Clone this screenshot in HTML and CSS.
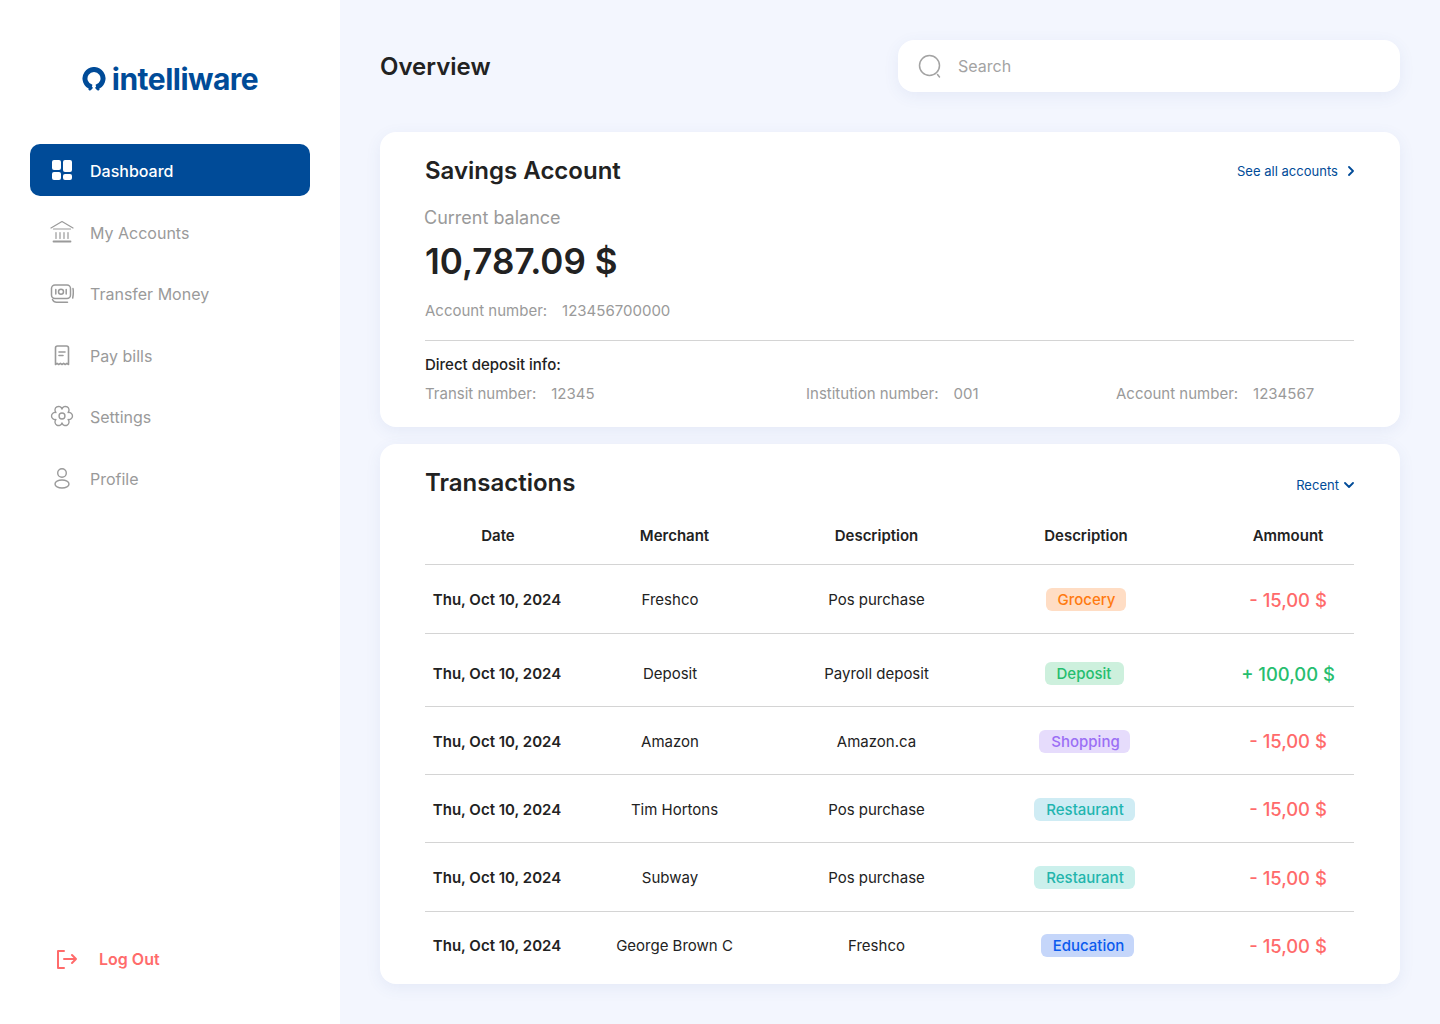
FILE: index.html
```html
<!DOCTYPE html>
<html lang="en">
<head>
  <meta charset="UTF-8">
  <meta name="viewport" content="width=device-width, initial-scale=1.0">
  <title>Intelliware - Overview</title>
  <link rel="stylesheet" href="styles.css">
</head>
<body>
  <aside class="sidebar">
    <div class="logo">
      <svg class="logo_mark" width="24" height="24" viewBox="0 0 24 24" fill="none" stroke="#004b98">
        <path stroke-width="5" d="M9.800 20.200A9 9 0 1 1 14.200 20.200"/>
        <path stroke-width="2.600" stroke-linecap="round" d="M7.800 22.200l1.600-1.400M16.200 22.200l-1.600-1.400"/>
      </svg>
      <span class="logo_text">intelliware</span>
    </div>
    <nav class="nav_list">
      <a class="nav_item active">
        <svg width="24" height="24" viewBox="0 0 24 24" fill="#fff">
          <rect x="2" y="2" width="9" height="10" rx="2"/>
          <rect x="13" y="2" width="9" height="12" rx="2"/>
          <rect x="2" y="14" width="9" height="8" rx="2"/>
          <rect x="13" y="16" width="9" height="6" rx="2"/>
        </svg>
        <span>Dashboard</span>
      </a>
      <a class="nav_item">
        <svg width="24" height="24" viewBox="0 0 24 24" fill="none" stroke="#9a9a9a" stroke-width="1.200" stroke-linecap="round" stroke-linejoin="round">
          <path d="M1 8 12 1.500 23 8"/>
          <path d="M3.500 9h17"/>
          <path d="M6 12.500v6M10 12.500v6M14 12.500v6M18 12.500v6"/>
          <path d="M3.500 21.500h17" stroke-width="1.800"/>
        </svg>
        <span>My Accounts</span>
      </a>
      <a class="nav_item">
        <svg width="24" height="24" viewBox="0 0 24 24" fill="none" stroke="#9a9a9a" stroke-width="1.500" stroke-linecap="round" stroke-linejoin="round">
          <rect x="1.500" y="4" width="19" height="13.500" rx="3.500"/>
          <circle cx="11" cy="10.700" r="2.500"/>
          <path d="M5.800 8.500v4.500M16.200 8.500v4.500"/>
          <path d="M2.500 18.500c.8 1.700 2 2.800 4 2.800h11"/>
          <path d="M23 7.500c.5 3 .4 6-.3 9.500"/>
        </svg>
        <span>Transfer Money</span>
      </a>
      <a class="nav_item">
        <svg width="24" height="24" viewBox="0 0 24 24" fill="none" stroke="#9a9a9a" stroke-width="1.600" stroke-linecap="round" stroke-linejoin="round">
          <path d="M5.500 21.500V5a2 2 0 0 1 2-2h9a2 2 0 0 1 2 2v16.500l-1.600-1.100-1.700 1.100-1.600-1.100-1.600 1.100-1.600-1.100-1.700 1.100-1.600-1.100z"/>
          <path d="M9 9h6M9 12.500h4"/>
        </svg>
        <span>Pay bills</span>
      </a>
      <a class="nav_item">
        <svg width="24" height="24" viewBox="-1 -1 26 26" fill="none" stroke="#9a9a9a" stroke-width="1.500" stroke-linecap="round" stroke-linejoin="round">
          <path d="M12 4.400A3.900 3.900 0 1 1 18.600 8.200 3.900 3.900 0 1 1 18.600 15.800 3.900 3.900 0 1 1 12 19.600 3.900 3.900 0 1 1 5.400 15.800 3.900 3.900 0 1 1 5.400 8.200 3.900 3.900 0 1 1 12 4.400z"/>
          <circle cx="12" cy="12" r="3.200"/>
        </svg>
        <span>Settings</span>
      </a>
      <a class="nav_item">
        <svg width="24" height="24" viewBox="0 0 24 24" fill="none" stroke="#9a9a9a" stroke-width="1.400">
          <circle cx="12" cy="7" r="4.300"/>
          <ellipse cx="12" cy="18" rx="7" ry="4"/>
        </svg>
        <span>Profile</span>
      </a>
    </nav>
    <a class="logout">
      <svg width="22" height="20" viewBox="0 0 22 20" fill="none" stroke="#ff6b6b" stroke-width="2" stroke-linecap="round" stroke-linejoin="round">
        <path d="M8 2H2v17h6"/>
        <path d="M8 10h12M16 6l4 4-4 4"/>
      </svg>
      <span>Log Out</span>
    </a>
  </aside>

  <main class="main">
    <header class="top_bar">
      <h1 class="page_tit">Overview</h1>
      <div class="search">
        <svg width="26" height="26" viewBox="0 0 26 26" fill="none" stroke="#a3a3a3" stroke-width="1.500" stroke-linecap="round">
          <circle cx="12.500" cy="12.500" r="10"/>
          <path d="M20.500 21.500l2 2.500"/>
        </svg>
        <span>Search</span>
      </div>
    </header>

    <section class="card account_card">
      <div class="card_head">
        <h2 class="card_tit">Savings Account</h2>
        <a class="head_link">See all accounts
          <svg class="see_arrow" width="8" height="10" viewBox="0 0 8 10" fill="none" stroke="#004b98" stroke-width="1.800" stroke-linecap="round" stroke-linejoin="round"><path d="M2 1l4 4-4 4"/></svg>
        </a>
      </div>
      <p class="balance_label">Current balance</p>
      <p class="balance">10,787.09 $</p>
      <p class="meta account_no"><span>Account number:</span><span>123456700000</span></p>
      <div class="deposit">
        <p class="deposit_tit">Direct deposit info:</p>
        <div class="deposit_row">
          <p class="meta"><span>Transit number:</span><span>12345</span></p>
          <p class="meta"><span>Institution number:</span><span>001</span></p>
          <p class="meta"><span>Account number:</span><span>1234567</span></p>
        </div>
      </div>
    </section>

    <section class="card trans_card">
      <div class="card_head">
        <h2 class="card_tit">Transactions</h2>
        <a class="head_link recent">Recent
          <svg width="10" height="8" viewBox="0 0 10 8" fill="none" stroke="#004b98" stroke-width="1.800" stroke-linecap="round" stroke-linejoin="round"><path d="M1 2l4 4 4-4"/></svg>
        </a>
      </div>
      <div class="table">
        <div class="row head_row">
          <div>Date</div>
          <div class="nudge">Merchant</div>
          <div>Description</div>
          <div>Description</div>
          <div class="amount_col">Ammount</div>
        </div>
        <div class="row row_a">
          <div class="date">Thu, Oct 10, 2024</div>
          <div>Freshco</div>
          <div>Pos purchase</div>
          <div><span class="pill grocery">Grocery</span></div>
          <div class="amount_col amount minus">- 15,00 $</div>
        </div>
        <div class="row row_b">
          <div class="date">Thu, Oct 10, 2024</div>
          <div>Deposit</div>
          <div>Payroll deposit</div>
          <div class="pill_left"><span class="pill deposit_pill">Deposit</span></div>
          <div class="amount_col amount plus">+ 100,00 $</div>
        </div>
        <div class="row row_c">
          <div class="date">Thu, Oct 10, 2024</div>
          <div>Amazon</div>
          <div>Amazon.ca</div>
          <div class="pill_left"><span class="pill shopping">Shopping</span></div>
          <div class="amount_col amount minus">- 15,00 $</div>
        </div>
        <div class="row row_c">
          <div class="date">Thu, Oct 10, 2024</div>
          <div class="nudge">Tim Hortons</div>
          <div>Pos purchase</div>
          <div class="pill_left"><span class="pill rest_a">Restaurant</span></div>
          <div class="amount_col amount minus">- 15,00 $</div>
        </div>
        <div class="row row_a">
          <div class="date">Thu, Oct 10, 2024</div>
          <div>Subway</div>
          <div>Pos purchase</div>
          <div class="pill_left"><span class="pill rest_b">Restaurant</span></div>
          <div class="amount_col amount minus">- 15,00 $</div>
        </div>
        <div class="row row_last">
          <div class="date">Thu, Oct 10, 2024</div>
          <div class="nudge">George Brown C</div>
          <div>Freshco</div>
          <div class="pill_right"><span class="pill education">Education</span></div>
          <div class="amount_col amount minus">- 15,00 $</div>
        </div>
      </div>
    </section>
  </main>
</body>
</html>
```

FILE: styles.css
```css
*{margin: 0;padding: 0;box-sizing: border-box;}
html,body{width:100%;height:100%;}
body{display: flex;height:1024px;overflow: hidden;background-color: #f3f6fe;color: #222;font-family: Inter, "Liberation Sans", sans-serif;}
a{display: flex;align-items: center;}

/* sidebar */
.sidebar{width:340px;flex-shrink: 0;height:100%;background-color: #fff;padding:64px 30px 55px;display: flex;flex-direction: column;}
.logo{display: flex;align-items: center;justify-content: center;gap:6px;height:30px;}
.logo_text{font-size: 30px;font-weight: 700;color: #004b98;letter-spacing: -0.5px;line-height: 30px;}
.nav_list{margin-top:50px;display: flex;flex-direction: column;gap:9.6px;}
.nav_item{height:52px;padding:2px 0 0 20px;gap:16px;border-radius: 10px;color: #9a9a9a;font-size: 16px;}
.nav_item svg{flex-shrink: 0;margin-top:-2px;}
.nav_item.active{background-color: #004b98;color: #fff;font-weight: 500;}
.logout{margin-top:auto;margin-left:26px;gap:21px;color: #ff6b6b;font-size: 16px;font-weight: 600;}

/* main */
.main{flex:1;padding:40px;}
.top_bar{display: flex;justify-content: space-between;align-items: center;height:52px;}
.page_tit{font-size: 24px;font-weight: 600;line-height: 52px;padding-top:1px;}
.search{width:502px;height:52px;border-radius: 16px;background-color: #fff;box-shadow: 0 4px 16px rgba(60,90,170,.08);display: flex;align-items: center;gap:15px;padding-left:19px;font-size: 16px;color: #a3a3a3;}
.card{background-color: #fff;border-radius: 16px;box-shadow: 0 4px 16px rgba(60,90,170,.08);padding:0 46px 0 45px;}
.account_card{height:295px;margin-top:40px;padding-top:24px;}
.trans_card{height:540px;margin-top:17px;padding-top:24px;}
.card_head{display: flex;justify-content: space-between;align-items: center;height:30px;}
.card_tit{font-size: 24px;font-weight: 600;line-height: 30px;}
.head_link{font-size: 13px;color: #004b98;gap:9px;letter-spacing: .02px;}
.see_arrow{margin-right:-1px;}
.recent{gap:5px;margin-top:4px;}
.balance_label{margin-top:20px;margin-left:-1px;font-size: 18px;line-height: 24px;color: #9a9a9a;}
.balance{margin-top:5px;font-size: 35px;font-weight: 600;line-height: 52px;}
.meta{font-size: 15px;line-height: 20px;color: #9a9a9a;display: flex;gap:15px;}
.account_no{margin-top:14px;}
.deposit{margin-top:19px;border-top: 1px solid #d4d4d4;padding-top:14px;}
.deposit_tit{font-size: 15px;font-weight: 500;line-height: 20px;}
.deposit_row{display: grid;grid-template-columns: 381px 310px auto;margin-top:9px;}

/* transactions */
.table{margin-top:10px;}
.row{display: grid;grid-template-columns: 146px 198px 215px 204px 166px;align-items: center;text-align: center;font-size: 15px;border-bottom: 1px solid #d4d4d4;}
.row:last-child{border-bottom: 0;}
.head_row{height:57px;padding-bottom:2px;font-weight: 600;}
.row_a{height:69px;padding-top:1px;}
.row_b{height:73px;padding-top:7px;}
.row_c{height:68px;padding-top:1px;}
.row_last{height:68px;padding-bottom:1px;}
.date{font-weight: 600;white-space: nowrap;padding-right:2px;}
.nudge{padding-left:9px;}
.amount_col{padding-left:34px;}
.amount{font-size: 18.4px;font-weight: 500;}
.minus{color: #ff6b6b;}
.plus{color: #27be6f;}
.pill{display: inline-block;height:23px;line-height: 23px;padding:0 11px 0 12px;border-radius: 6px;font-weight: 500;}
.pill_left{padding-right:3px;}
.pill_right{padding-left:3px;}
.grocery{background-color: #ffddc4;color: #ff7a10;}
.deposit_pill{background-color: #cdf0dd;color: #25be6e;padding-right:13px;}
.shopping{background-color: #e6dcfc;color: #9b6ff5;padding-right:10px;}
.rest_a{background-color: #cfecf4;color: #1fb5b0;}
.rest_b{background-color: #cbf0ec;color: #22b5ac;}
.education{background-color: #c5d6fa;color: #0b5bee;padding-right:10px;}
```
